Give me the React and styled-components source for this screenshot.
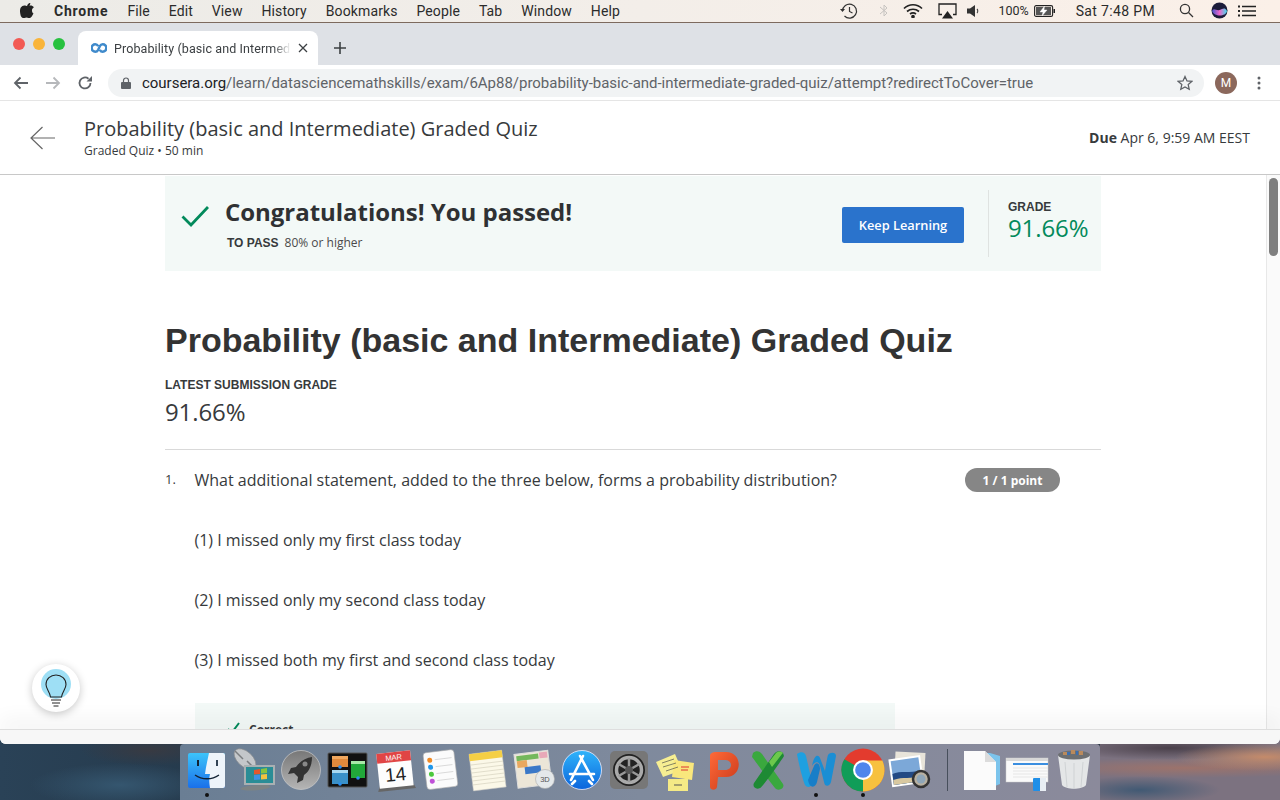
import React from 'react';
import styled, { createGlobalStyle } from 'styled-components';

const Global = createGlobalStyle`
  html, body { margin: 0; padding: 0; height: 100%; overflow: hidden; }
  * { box-sizing: border-box; }
`;

const Desktop = styled.div`
  width: 1280px; height: 800px; position: relative; overflow: hidden;
  display: flex; flex-direction: column;
  background:
    radial-gradient(ellipse 90px 14px at 1265px 757px, rgba(200,140,105,.95), transparent),
    radial-gradient(ellipse 170px 10px at 1185px 768px, rgba(160,115,105,.9), transparent),
    radial-gradient(ellipse 110px 12px at 1170px 748px, rgba(72,62,72,.95), transparent),
    radial-gradient(ellipse 80px 14px at 1140px 790px, rgba(62,88,115,.95), transparent),
    linear-gradient(90deg, transparent 1100px, #7c7280 1100px),
    radial-gradient(ellipse 90px 22px at 120px 785px, #35566f, transparent),
    radial-gradient(ellipse 70px 16px at 150px 750px, #383a42, transparent),
    linear-gradient(90deg, #2a4257, #1e2e3c 40%, #26394b);
`;
const MenuBar = styled.div`
  height: 23px; flex: none; display: flex; align-items: center; justify-content: space-between;
  padding: 0 24px 0 20px;
  background: linear-gradient(90deg, #ecebe7, #f3eee9 50%, #fbf0e8);
  border-bottom: 1px solid #7d6a5e;
  font: 14px "Roboto", "Liberation Sans", sans-serif; color: #2b2b2b;
`;
const MenuLeft = styled.div`display: flex; align-items: center; gap: 18.9px;`;
const MenuItem = styled.span`font-weight: ${p => p.$b ? 700 : 400}; white-space: nowrap; letter-spacing: ${p => p.$b ? '.85px' : '.12px'};`;
const AppleBox = styled.svg`width: 14px; height: 16px; margin: -2px 1px 0 0;`;
const MenuRight = styled.div`display: flex; align-items: center; gap: 0; margin-top: -1px;`;
const Tray = styled.span`display: flex; align-items: center; justify-content: center; width: ${p => p.$w}px; margin-left: ${p => p.$ml || 0}px;`;
const Battery = styled.span`font-size: 12.5px; margin-left: 18px; white-space: nowrap;`;
const Clock = styled.span`font-size: 14px; letter-spacing: .35px; margin-left: 20px; white-space: nowrap;`;
const Window = styled.div`
  height: 721px; flex: none; display: flex; flex-direction: column; overflow: hidden;
  background: #fff; border-radius: 0 0 6px 6px;
`;
const TabStrip = styled.div`
  height: 42px; flex: none; display: flex; align-items: flex-end; background: #dee1e6; padding-left: 13px;
`;
const Traffic = styled.div`display: flex; gap: 8px; align-self: flex-start; margin-top: 15px; width: 65px;`;
const Light = styled.span`width: 12px; height: 12px; border-radius: 50%; background: ${p => p.$c};`;
const Tab = styled.div`
  width: 240px; height: 34px; background: #fff; border-radius: 8px 8px 0 0; display: flex; align-items: center; padding: 0 0 0 13px;
  font: 12.5px "Roboto", "Liberation Sans", sans-serif; color: #3c4043;
`;
const TabTitle = styled.span`
  margin: 0 7px 0 7px; width: 177px; overflow: hidden; white-space: nowrap;
  -webkit-mask-image: linear-gradient(90deg, #000 90%, transparent);
  mask-image: linear-gradient(90deg, #000 90%, transparent);
  letter-spacing: .1px;
`;
const Plus = styled.svg`width: 14px; height: 14px; margin: 0 0 10px 15px;`;
const Toolbar = styled.div`
  height: 36px; flex: none; display: flex; align-items: center; padding: 0 19px 0 13px; background: #fff;
  border-bottom: 1px solid #e5e5e5;
`;
const NavBtn = styled.span`width: 32px; display: flex; justify-content: flex-start; flex: none;`;
const Omni = styled.div`
  flex: 1; height: 28px; border-radius: 14px; background: #f1f3f4; margin-left: -1px; display: flex; align-items: center; padding: 0 11px 0 13px;
  font: 15px "Roboto", "Liberation Sans", sans-serif; color: #5f6368; white-space: nowrap; letter-spacing: -.02px;
`;
const Host = styled.span`color: #202124;`;
const Url = styled.span`flex: 1; margin-left: 11px;`;
const Avatar = styled.span`
  width: 22px; height: 22px; border-radius: 50%; background: #8b685c; color: #fff; margin-left: 11px; flex: none;
  font: 12px "Roboto", sans-serif; display: flex; align-items: center; justify-content: center;
`;
const Dots = styled.svg`width: 4px; height: 14px; margin-left: 20px; flex: none;`;

const PageHeader = styled.header`
  height: 74px; flex: none; display: flex; align-items: center; padding: 0 30px; border-bottom: 1px solid #c8c8c8; background: #fff;
  font-family: "Open Sans", sans-serif; color: #373a3c;
`;
const BackArrow = styled.svg`width: 26px; height: 24px; flex: none; margin-right: 28px;`;
const HeaderText = styled.div`flex: 1;`;
const HeaderTitle = styled.div`font-size: 20px; line-height: 26px; color: #373a3c;`;
const HeaderSub = styled.div`font-size: 12px; line-height: 16px; margin-top: 1px;`;
const Due = styled.div`font-size: 14px; b { font-weight: 700; }`;

const Body = styled.div`flex: 1; min-height: 0; display: flex; position: relative;`;
const Scroll = styled.div`flex: 1; min-width: 0; overflow: hidden; padding: 1px 0 0 165px;`;
const ScrollTrack = styled.div`width: 14px; flex: none; background: #fafafa; border-left: 1px solid #e8e8e8; padding: 3px 2px 0 2px;`;
const ScrollThumb = styled.div`width: 9px; height: 78px; border-radius: 5px; background: #7f7f7f;`;
const Content = styled.div`width: 936px; font-family: "Open Sans", sans-serif; color: #373a3c;`;
const Banner = styled.section`
  height: 95px; background: #f3f9f7; display: flex; align-items: center; padding-left: 16px;
`;
const BigCheck = styled.svg`width: 28px; height: 22px; flex: none; margin: -16px 16px 0 0;`;
const BannerText = styled.div`flex: 1; margin-top: 0;`;
const BannerTitle = styled.div`font-size: 24px; font-weight: 700; line-height: 32px; color: #2f3133; letter-spacing: -.03px; margin-top: -1px;`;
const ToPass = styled.div`font-size: 12px; line-height: 16px; margin: 7px 0 0 2px; color: #4a4a4a; b { font: 700 12px "Liberation Sans", sans-serif; color: #373a3c; margin-right: 6px; }`;
const KeepBtn = styled.button`
  width: 122px; height: 36px; border: 0; border-radius: 2px; background: #2a73cc; color: #fff; flex: none; margin-top: 2px;
  font: 600 12.8px "Open Sans", sans-serif; padding: 0;
`;
const GradeCol = styled.div`
  width: 113px; height: 67px; margin-left: 24px; border-left: 1px solid #dfe3e1; padding: 8px 0 0 19px; flex: none;
`;
const SmallCaps = styled.div`font: 700 12px/18px "Liberation Sans", sans-serif; color: #373a3c;`;
const GradeVal = styled.div`font-size: 24px; line-height: 24px; color: #028a5b; letter-spacing: -.1px;`;
const H1 = styled.h1`font: 700 34px/46px "Liberation Sans", sans-serif; color: #333; margin: 46px 0 0;`;
const SubLabel = styled.div`font: 700 12px/16px "Liberation Sans", sans-serif; color: #373a3c; margin-top: 14px;`;
const SubVal = styled.div`font-size: 24px; line-height: 32px; margin-top: 3px; letter-spacing: -.1px;`;
const Rule = styled.hr`border: 0; border-top: 1px solid #d9d9d9; margin: 21px 0 0;`;
const Question = styled.div`display: flex; padding-top: 18px;`;
const Num = styled.div`width: 30px; flex: none; font-size: 13px; line-height: 22px;`;
const QBody = styled.div`flex: 1;`;
const QTop = styled.div`display: flex; justify-content: space-between; padding-right: 41px;`;
const Para = styled.div`font-size: 16px; line-height: 24px; margin-bottom: 36px; margin-left: -.5px;`;
const Pill = styled.span`
  width: 95px; height: 24px; border-radius: 12px; background: #868686; color: #fff; font-size: 12px; font-weight: 700;
  display: flex; align-items: center; justify-content: center;
`;
const Feedback = styled.div`width: 700px; height: 120px; background: #f3f9f7; margin-top: -5px; padding: 19px 0 0 31px; display: flex; gap: 9px;`;
const FbCheck = styled.svg`width: 14px; height: 12px; flex: none;`;
const FbLabel = styled.span`font-size: 12px; font-weight: 700; line-height: 16px;`;
const Bulb = styled.div`
  position: absolute; left: 32px; top: 489px; width: 48px; height: 48px; border-radius: 50%; background: #fff;
  box-shadow: 0 2px 8px rgba(0,0,0,.22); display: flex; align-items: center; justify-content: center;
`;
const BulbSvg = styled.svg`width: 30px; height: 40px; margin-top: 2px;`;
const WinFoot = styled.div`height: 15px; flex: none; background: #f7f7f7; border-top: 1px solid #dedede; box-shadow: 0 -10px 20px rgba(0,0,0,.05); position: relative;`;

const Dock = styled.div`
  position: absolute; left: 180px; bottom: 0; width: 920px; height: 56px;
  background: linear-gradient(90deg, #6a7e94, #7f8a9d 50%, #8b8a9b);
  border-radius: 4px 4px 0 0; display: flex; align-items: center; padding: 0 0 4px 4px;
`;
const DockSlot = styled.div`width: ${p => p.$w || 46.8}px; height: 46px; flex: none; position: relative; display: flex; align-items: center; justify-content: center;`;
const RunDot = styled.span`position: absolute; left: 50%; bottom: -4px; width: 4px; height: 4px; margin-left: -2px; border-radius: 50%; background: #111;`;
const DockSep = styled.span`width: 1px; height: 42px; background: #474f5c; margin: 0 9px 0 14px; flex: none;`;

const Ic = ({ children, s = 44, vb = '0 0 44 44' }) => <svg width={s} height={s} viewBox={vb}>{children}</svg>;
const Finder = () => <Ic><defs><linearGradient id="fn" x1="0" y1="0" x2="0" y2="1"><stop offset="0" stopColor="#3cc4fa"/><stop offset="1" stopColor="#1a70ea"/></linearGradient></defs><rect x="3" y="5" width="37" height="35" rx="2" fill="url(#fn)"/><path d="M24 5h14a2 2 0 0 1 2 2v31a2 2 0 0 1-2 2H25c-1-6-1-10 0-14h-5C21 18 23 10 24 5z" fill="#eef4fa"/><rect x="12" y="12" width="2" height="6" fill="#123"/><rect x="31" y="12" width="2" height="6" fill="#345"/><path d="M10 27c7 5 17 5 24 0" stroke="#123" strokeWidth="1.300" fill="none"/></Ic>;
const Satellite = () => <Ic><ellipse cx="13" cy="11" rx="13" ry="7.500" transform="rotate(42 13 11)" fill="#c4c7ca" stroke="#8a8d90" strokeWidth=".7"/><path d="M3 3l8 8M15 13l5 5" stroke="#7b7e80" strokeWidth="1.500"/><rect x="12" y="17" width="31" height="20" fill="#a9b0b2"/><rect x="14" y="19" width="27" height="16" fill="#2a8d96"/><path d="M22 22l6-1v5l-6 .5z" fill="#e4572e"/><path d="M29 21l6-1v5l-6 .5z" fill="#86c440"/><path d="M22 27l6-.5v5l-6 .5z" fill="#3f92e4"/><path d="M29 26.500l6-.5v5l-6 .5z" fill="#f1c240"/><path d="M8 41c3-4 24-4 28-4l3 2c-6 3-24 5-31 2z" fill="#7d8384"/></Ic>;
const Rocket = () => <Ic><defs><linearGradient id="rk" x1="0" y1="0" x2="0" y2="1"><stop offset="0" stopColor="#777"/><stop offset="1" stopColor="#b5b5b5"/></linearGradient></defs><circle cx="22" cy="22" r="19.500" fill="url(#rk)" stroke="#ccc" strokeWidth=".7"/><path d="M33 9c-6 1-12 4-16 10l-5 1-3 6 6-1 4 4-1 6 6-3 1-5c6-4 8-11 8-18z" fill="#333"/><circle cx="26" cy="16" r="2.500" fill="#888"/></Ic>;
const Mission = () => <Ic><rect x="2" y="5" width="39" height="34" rx="1" fill="#111" stroke="#555"/><rect x="6" y="8" width="16" height="11" fill="#e08a3c"/><rect x="6" y="22" width="16" height="14" fill="#3a90c8"/><rect x="25" y="13" width="14" height="17" fill="#22a83a"/><rect x="6" y="8" width="16" height="3" fill="#f0a860"/><rect x="6" y="22" width="16" height="3" fill="#a8d8f0"/><rect x="25" y="13" width="14" height="3" fill="#a8e8a8"/><circle cx="14" cy="19" r="1.800" fill="#2a8ef0"/><circle cx="14" cy="36" r="1.800" fill="#2a8ef0"/><circle cx="32" cy="30" r="1.800" fill="#2a8ef0"/></Ic>;
const Calendar = () => <Ic><g transform="rotate(-6 22 22)"><path d="M5 37l-2 5h38l-2-5z" fill="#666"/><rect x="5" y="4" width="34" height="35" fill="#fdfdfd"/><path d="M5 4h34v10H5z" fill="#e04545"/><text x="22" y="12" fontSize="7.500" fill="#fff" textAnchor="middle" fontFamily="Liberation Sans">MAR</text><text x="22" y="33" fontSize="19" fill="#222" textAnchor="middle" fontFamily="Liberation Sans">14</text></g></Ic>;
const Reminders = () => <Ic><g transform="rotate(-7 22 22)"><rect x="6" y="3" width="31" height="37" rx="3" fill="#fbfbfb" stroke="#aaa" strokeWidth=".6"/><circle cx="12" cy="11" r="2.500" fill="#f08a24"/><circle cx="12" cy="18" r="2.500" fill="#1e96ea"/><circle cx="12" cy="25" r="2.500" fill="#4cc83c"/><circle cx="12" cy="32" r="2.500" fill="#c050d8"/><path d="M17 11h17M17 18h17M17 25h17M17 32h17" stroke="#ccc" strokeWidth=".7"/></g></Ic>;
const Notes = () => <Ic><g transform="rotate(-7 22 22)"><rect x="5" y="4" width="33" height="37" fill="#fbf8e8" stroke="#bbb" strokeWidth=".5"/><rect x="5" y="4" width="33" height="7" fill="#f5cf45"/><path d="M5 15h33M5 19h33M5 23h33M5 27h33M5 31h33M5 35h33" stroke="#d8d4c0" strokeWidth=".7"/></g></Ic>;
const Maps = () => <Ic><g transform="rotate(-7 22 22)"><rect x="3" y="4" width="34" height="34" fill="#ece6d8" stroke="#ddd"/><path d="M5 6h22v5H5z" fill="#74b85c"/><path d="M5 11h10v7H5z" fill="#e8a860"/><path d="M12 18h16v7H12z" fill="#3a78c8"/><path d="M28 5h8v6h-8z" fill="#e8a8b8"/></g><circle cx="32" cy="31" r="9.500" fill="#e4e8ea" stroke="#aaa" strokeWidth=".6"/><text x="32" y="34" fontSize="7.500" fontFamily="Liberation Sans" fill="#555" textAnchor="middle">3D</text></Ic>;
const AppStore = () => <Ic><defs><linearGradient id="as" x1="0" y1="0" x2="0" y2="1"><stop offset="0" stopColor="#2fb4fa"/><stop offset="1" stopColor="#0c64dc"/></linearGradient></defs><circle cx="22" cy="22" r="19.500" fill="url(#as)" stroke="#eef" strokeWidth=".8"/><path d="M23 8L11 32M20 8l13 24M10 26h24M15 33l-3 3M29 33l3 3" stroke="#fff" strokeWidth="2.600" strokeLinecap="round" fill="none"/></Ic>;
const SysPref = () => <Ic><rect x="3" y="3" width="38" height="38" rx="5" fill="#777" /><circle cx="22" cy="22" r="16" fill="#222"/><circle cx="22" cy="22" r="12.500" fill="none" stroke="#aaa" strokeWidth="3.500"/><path d="M22 10v24M11.500 16l21 12M11.500 28l21-12" stroke="#999" strokeWidth="2.500"/><circle cx="22" cy="22" r="4" fill="#555"/></Ic>;
const Stickies = () => <Ic><path d="M3 14L22 6l7 16-19 7z" fill="#f6ee92"/><path d="M21 12l20 3-2 17-20-3z" fill="#f9e77c"/><path d="M15 31h20v12H15z" fill="#f5ea86"/><path d="M9 15l12-4M10 19l13-4M13 23l12-4" stroke="#665" strokeWidth=".8"/><path d="M28 19h8M28 22h7" stroke="#d33" strokeWidth="1"/><path d="M21 37h8" stroke="#555" strokeWidth="1"/></Ic>;
const PP = () => <Ic><defs><linearGradient id="pp" x1="0" y1="0" x2="1" y2="1"><stop offset="0" stopColor="#ff6a38"/><stop offset="1" stopColor="#c8381a"/></linearGradient></defs><path fillRule="evenodd" d="M10 8c0-3 3-4 6-4h10c17 0 17 25 0 25h-8l-1 10c-1 4-7 3-7 0zM18 12h7c8 0 8 10 0 10h-7z" fill="url(#pp)"/></Ic>;
const XL = () => <Ic><path d="M6 5c3-3 7-2 9 1l21 30c2 4-3 7-7 5-2-1-22-30-24-32z" fill="#3aa83e"/><path d="M36 5c-3-3-7-2-9 1L7 35c-2 4 2 7 6 5 3-1 23-30 24-32z" fill="#1e8a34" /><path d="M36 5c-2-2-5-2-7 0L22 14l3 5 10-13z" fill="#6cc84c"/></Ic>;
const WW = () => <Ic><path d="M3 6c4-3 8-2 9 2l6 26c0 6-5 6-7 3C8 30 4 12 3 6z" fill="#1ea0e0"/><path d="M14 32c2 10 8 7 9 2l3-13c0-6-4-8-6-3z" fill="#187ec8"/><path d="M18 18c3-5 7-5 8 0l4 16c1 6 6 4 7 0l5-26c0-4-6-4-8-1-1 3-3 16-3 16l-5-13c-2-4-6-3-8 8z" fill="#1a8ed4"/></Ic>;
const Chrome = () => <Ic vb="0 0 44 44" s={46}><circle cx="22" cy="22" r="20.500" fill="#e33b2e"/><path d="M22 22L4.200 11.700A20.500 20.500 0 0 0 22 42.500z" fill="#109d58" /><path d="M22 13h18.500A20.500 20.500 0 0 1 22 42.500L22 22z" fill="#f7c13f"/><circle cx="22" cy="22" r="9.500" fill="#fff"/><circle cx="22" cy="22" r="7.500" fill="#4f86ec"/></Ic>;
const Preview = () => <Ic><rect x="8" y="4" width="30" height="24" fill="#e8e4da" transform="rotate(3 20 14)"/><g transform="rotate(-8 20 22)"><rect x="3" y="9" width="32" height="28" fill="#fff"/><rect x="5" y="11" width="28" height="24" fill="#7ca8d8"/><path d="M5 24c8-3 18 2 28 0v11H5z" fill="#234a84"/><path d="M5 30c10-2 18 2 28 0v5H5z" fill="#d8c8a0"/></g><circle cx="34" cy="31" r="8" fill="#b8b0a0" stroke="#333" strokeWidth="2.500"/><circle cx="34" cy="31" r="4.500" fill="#8fa6b8"/></Ic>;
const Doc = () => <Ic><path d="M10 5h22l10 3v28l-5 2z" fill="#7cc4ec"/><path d="M6 3h21l11 11v28H6z" fill="#fbfbfb"/><path d="M27 3l11 11H27z" fill="#dcdcdc"/></Ic>;
const FinderWin = () => <Ic><rect x="1" y="10" width="42" height="24" fill="#fafafa" stroke="#ccc" strokeWidth=".5"/><rect x="1" y="10" width="42" height="3" fill="#d8d8d8"/><rect x="8" y="15" width="35" height="2" fill="#3a8ee0"/><path d="M8 20h35M8 23h35M8 26h35M8 29h35" stroke="#e6e6e6"/><rect x="28" y="30" width="13" height="13" rx="1" fill="#1f8fe8"/><path d="M35 30h6v13h-6z" fill="#e8eef4"/></Ic>;
const Trash = () => <Ic><path d="M6 7c10 4 22 4 32 0l-4 30c-4 5-20 5-24 0z" fill="#e4e6e7"/><ellipse cx="22" cy="7" rx="16" ry="4.500" fill="#6c6f72"/><path d="M11 4h4v3h-4zM19 2h4v4h-4zM27 3h4v4h-4z" fill="#b98a5c"/><path d="M15 4h3v3h-3zM24 3h2v4h-2z" fill="#3a6fb0"/><path d="M13 14l2 25M22 15v26M31 14l-2 25" stroke="#cfd2d4" strokeWidth="1"/></Ic>;

const dockLeft = [[Finder,1],[Satellite],[Rocket],[Mission],[Calendar],[Reminders],[Notes],[Maps],[AppStore],[SysPref],[Stickies],[PP],[XL],[WW,1],[Chrome,1],[Preview]];
const dockRight = [[Doc],[FinderWin],[Trash]];

const menus = ['File','Edit','View','History','Bookmarks','People','Tab','Window','Help'];

export default function App() {
  return (
    <Desktop>
      <Global />
      <MenuBar>
        <MenuLeft>
          <AppleBox viewBox="0 0 14 16"><path fill="#222" d="M10.300 1c.1 1-.3 1.900-.9 2.600-.6.700-1.500 1.200-2.400 1.100-.1-.9.400-1.900.9-2.500C8.500 1.500 9.500 1 10.300 1zM13.300 11.700c-.4.900-.6 1.300-1.100 2.100-.7 1.100-1.700 2.400-2.900 2.400-1.100 0-1.400-.7-2.800-.7s-1.800.7-2.900.7c-1.200 0-2.100-1.200-2.800-2.300C-.2 10.900-.4 7.300.8 5.500c.9-1.300 2.200-2 3.500-2s2.100.7 3.200.7 1.700-.7 3.200-.7c1.100 0 2.300.6 3.200 1.700-2.800 1.500-2.300 5.500-.1 6.500z"/></AppleBox>
          <MenuItem $b>Chrome</MenuItem>
          {menus.map(m => <MenuItem key={m}>{m}</MenuItem>)}
        </MenuLeft>
        <MenuRight>
          <Tray $w={22}><svg width="20" height="18" viewBox="0 0 20 18" fill="none" stroke="#333" strokeWidth="1.200"><path d="M3.500 9a7 7 0 1 1 2 5"/><path d="M1 7l2.500 3L6 7" fill="#333" stroke="none"/><path d="M10.500 5v4.500l3 1.500"/></svg></Tray>
          <Tray $w={14} $ml={17}><svg width="10" height="15" viewBox="0 0 10 15" fill="none" stroke="#c6c3c0" strokeWidth="1"><path d="M1 4l7 6-3 3V2l3 3-7 6"/></svg></Tray>
          <Tray $w={22} $ml={11}><svg width="20" height="15" viewBox="0 0 20 15" fill="none" stroke="#222" strokeWidth="1.700"><path d="M1 5.500c5-5 13-5 18 0M4 8.500c3.500-3 8.500-3 12 0M7 11c2-1.500 4-1.500 6 0"/><circle cx="10" cy="13.500" r="1" fill="#222"/></svg></Tray>
          <Tray $w={20} $ml={13}><svg width="19" height="16" viewBox="0 0 19 16" fill="none"><path d="M4 11.500H1V1h17v10.500h-3" stroke="#222" strokeWidth="1.300"/><path d="M9.500 8l5.500 7.500H4z" fill="#222"/></svg></Tray>
          <Tray $w={14} $ml={9}><svg width="13" height="14" viewBox="0 0 13 14"><path d="M0 4.500h3L8 1v12L3 9.500H0z" fill="#333"/><path d="M10 5c1 1 1 3 0 4" stroke="#444" strokeWidth="1.100" fill="none"/></svg></Tray>
          <Battery>100%</Battery>
          <Tray $w={22} $ml={5}><svg width="22" height="12" viewBox="0 0 22 12"><rect x=".6" y=".6" width="18" height="10.800" rx="1.500" fill="none" stroke="#222" strokeWidth="1.100"/><rect x="2" y="2" width="15" height="8" fill="#555"/><path d="M10.500 1L6 7h3l-1 4 5-6h-3z" fill="#fff" stroke="#fff" strokeWidth=".4"/><rect x="19.500" y="4" width="1.500" height="4" fill="#222"/></svg></Tray>
          <Clock>Sat 7:48 PM</Clock>
          <Tray $w={16} $ml={23}><svg width="15" height="15" viewBox="0 0 15 15" fill="none" stroke="#333" strokeWidth="1.300"><circle cx="6" cy="6" r="4.600"/><path d="M9.500 9.500L14 14"/></svg></Tray>
          <Tray $w={18} $ml={16}><svg width="17" height="17" viewBox="0 0 17 17"><defs><linearGradient id="si" x1="0" y1="0" x2="1" y2="0"><stop offset="0" stopColor="#45c"/><stop offset=".5" stopColor="#e6c"/><stop offset="1" stopColor="#4de"/></linearGradient></defs><circle cx="8.500" cy="8.500" r="8" fill="#1c1c3a"/><path d="M1 9c2-4 4 0 7.500-1s5-3 7.500 1c-1 6-13 6-15 0z" fill="url(#si)"/></svg></Tray>
          <Tray $w={18} $ml={10}><svg width="18" height="12" viewBox="0 0 18 12"><path d="M0 1.500h2M0 6h2M0 10.500h2" stroke="#222" strokeWidth="1.800"/><path d="M4 1.500h14M4 6h14M4 10.500h14" stroke="#222" strokeWidth="1.300"/></svg></Tray>
        </MenuRight>
      </MenuBar>
      <Window>
        <TabStrip>
          <Traffic><Light $c="#f25a54"/><Light $c="#f9b43a"/><Light $c="#27c13f"/></Traffic>
          <Tab>
            <svg width="16" height="10" viewBox="0 0 16 10" fill="none" stroke="#3f8acb" strokeWidth="2.500"><path d="M7.200 3.200C6.500 2 5.600 1.300 4.300 1.300a3.700 3.700 0 1 0 0 7.400c1.300 0 2.200-.7 2.900-1.900L8.800 3.200C9.500 2 10.400 1.300 11.700 1.300a3.700 3.700 0 1 1 0 7.400c-1.300 0-2.200-.7-2.900-1.900"/></svg>
            <TabTitle>Probability (basic and Intermediate) Graded Quiz</TabTitle>
            <svg width="10" height="10" viewBox="0 0 10 10" stroke="#3c4043" strokeWidth="1.300"><path d="M1 1l8 8M9 1l-8 8"/></svg>
          </Tab>
          <Plus viewBox="0 0 14 14" stroke="#3c4043" strokeWidth="1.600"><path d="M7 1v12M1 7h12"/></Plus>
        </TabStrip>
        <Toolbar>
          <NavBtn><svg width="16" height="14" viewBox="0 0 16 14" fill="none" stroke="#5f6368" strokeWidth="1.800"><path d="M15 7H2M7.500 1.500L2 7l5.500 5.500"/></svg></NavBtn>
          <NavBtn><svg width="16" height="14" viewBox="0 0 16 14" fill="none" stroke="#b6b8bb" strokeWidth="1.800"><path d="M1 7h13M8.500 1.500L14 7l-5.500 5.500"/></svg></NavBtn>
          <NavBtn><svg width="16" height="16" viewBox="0 0 16 16" fill="none"><path d="M13.500 8A5.500 5.500 0 1 1 11.500 3.700" stroke="#5f6368" strokeWidth="1.800"/><path d="M9.500 6.500H15V1z" fill="#5f6368"/></svg></NavBtn>
          <Omni>
            <svg width="10" height="12" viewBox="0 0 10 12"><rect x="0" y="5" width="10" height="7" rx="1" fill="#5f6368"/><path d="M2.500 5.500V3.500a2.500 2.500 0 0 1 5 0v2" fill="none" stroke="#5f6368" strokeWidth="1.200"/></svg>
            <Url><Host>coursera.org</Host>/learn/datasciencemathskills/exam/6Ap88/probability-basic-and-intermediate-graded-quiz/attempt?redirectToCover=true</Url>
            <svg width="16" height="16" viewBox="0 0 16 16" fill="none" stroke="#5f6368" strokeWidth="1.300"><path d="M8 1.500l2 4.400 4.800.5-3.600 3.200 1 4.700L8 11.900l-4.200 2.400 1-4.700L1.200 6.400 6 5.900z"/></svg>
          </Omni>
          <Avatar>M</Avatar>
          <Dots viewBox="0 0 4 14" fill="#5f6368"><circle cx="2" cy="2" r="1.500"/><circle cx="2" cy="7" r="1.500"/><circle cx="2" cy="12" r="1.500"/></Dots>
        </Toolbar>
        <PageHeader>
          <BackArrow viewBox="0 0 26 24" fill="none" stroke="#666" strokeWidth="1.200"><path d="M25 12H1M12.500 1L1 12l11.500 11"/></BackArrow>
          <HeaderText>
            <HeaderTitle>Probability (basic and Intermediate) Graded Quiz</HeaderTitle>
            <HeaderSub>Graded Quiz • 50 min</HeaderSub>
          </HeaderText>
          <Due><b>Due</b> Apr 6, 9:59 AM EEST</Due>
        </PageHeader>
        <Body>
          <Scroll>
            <Content>
              <Banner>
                <BigCheck viewBox="0 0 28 22" fill="none" stroke="#028a5b" strokeWidth="2.800"><path d="M1.500 11.500L10 20 27 2"/></BigCheck>
                <BannerText>
                  <BannerTitle>Congratulations! You passed!</BannerTitle>
                  <ToPass><b>TO PASS</b>80% or higher</ToPass>
                </BannerText>
                <KeepBtn>Keep Learning</KeepBtn>
                <GradeCol>
                  <SmallCaps>GRADE</SmallCaps>
                  <GradeVal>91.66%</GradeVal>
                </GradeCol>
              </Banner>
              <H1>Probability (basic and Intermediate) Graded Quiz</H1>
              <SubLabel>LATEST SUBMISSION GRADE</SubLabel>
              <SubVal>91.66%</SubVal>
              <Rule />
              <Question>
                <Num>1.</Num>
                <QBody>
                  <QTop>
                    <Para>What additional statement, added to the three below, forms a probability distribution?</Para>
                    <Pill>1 / 1 point</Pill>
                  </QTop>
                  <Para>(1) I missed only my first class today</Para>
                  <Para>(2) I missed only my second class today</Para>
                  <Para>(3) I missed both my first and second class today</Para>
                  <Feedback>
                    <FbCheck viewBox="0 0 14 12" fill="none" stroke="#028a5b" strokeWidth="2"><path d="M2 7l3.500 4L13 1"/></FbCheck>
                    <FbLabel>Correct</FbLabel>
                  </Feedback>
                </QBody>
              </Question>
            </Content>
          </Scroll>
          <ScrollTrack><ScrollThumb /></ScrollTrack>
          <Bulb>
            <BulbSvg viewBox="0 0 30 40"><circle cx="15" cy="15" r="15" fill="#9edff5"/><path d="M15 6c-5.500 0-10 4-10 9.500 0 4.500 4 7.500 4.500 12.500h11c.5-5 4.500-8 4.500-12.500C25 10 20.500 6 15 6z" fill="none" stroke="#222" strokeWidth="1.100"/><path d="M10 31h10M11 34h8M12.500 37h5" stroke="#222" strokeWidth="1"/></BulbSvg>
          </Bulb>
        </Body>
        <WinFoot />
      </Window>
      <Dock>
        {dockLeft.map(([I, r], i) => <DockSlot key={i}><I />{r && <RunDot />}</DockSlot>)}
        <DockSep />
        {dockRight.map(([I], i) => <DockSlot key={i}><I /></DockSlot>)}
      </Dock>
    </Desktop>
  );
}
